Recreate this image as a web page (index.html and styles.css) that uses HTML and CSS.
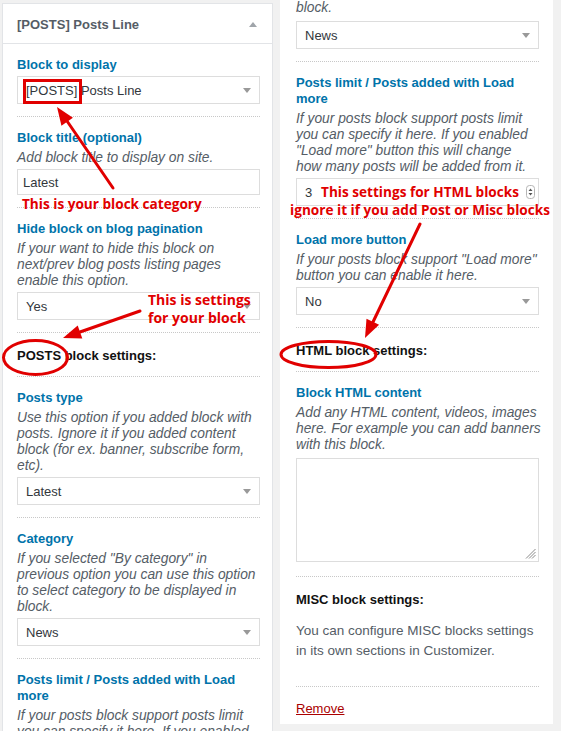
FILE: index.html
```html
<!DOCTYPE html>
<html>
<head>
<meta charset="utf-8">
<link rel="stylesheet" href="styles.css">
</head>
<body>
<div class="page">
  <section class="panel panel-left">
    <header class="phead"><span class="ptitle">[POSTS] Posts Line</span><i class="uptri"></i></header>
    <div class="pbody">
      <div class="ctl">
        <div class="lbl">Block to display</div>
        <div class="sel"><span>[POSTS] Posts Line</span><i class="caret"></i></div>
      </div>
      <div class="sep"></div>
      <div class="ctl">
        <div class="lbl">Block title (optional)</div>
        <div class="desc">Add block title to display on site.</div>
        <div class="inp">Latest</div>
      </div>
      <div class="sep"></div>
      <div class="ctl">
        <div class="lbl">Hide block on blog pagination</div>
        <div class="desc">If your want to hide this block on<br>next/prev blog posts listing pages<br>enable this option.</div>
        <div class="sel"><span>Yes</span><i class="caret"></i></div>
      </div>
      <div class="sep"></div>
      <div class="heading">POSTS block settings:</div>
      <div class="sep"></div>
      <div class="ctl">
        <div class="lbl">Posts type</div>
        <div class="desc">Use this option if you added block with<br>posts. Ignore it if you added content<br>block (for ex. banner, subscribe form,<br>etc).</div>
        <div class="sel"><span>Latest</span><i class="caret"></i></div>
      </div>
      <div class="sep"></div>
      <div class="ctl">
        <div class="lbl">Category</div>
        <div class="desc">If you selected "By category" in<br>previous option you can use this option<br>to select category to be displayed in<br>block.</div>
        <div class="sel"><span>News</span><i class="caret"></i></div>
      </div>
      <div class="sep"></div>
      <div class="ctl">
        <div class="lbl">Posts limit / Posts added with Load more</div>
        <div class="desc">If your posts block support posts limit<br>you can specify it here. If you enabled</div>
      </div>
    </div>
  </section>

  <section class="panel panel-right">
    <div class="ctl ctl-top">
      <div class="desc desc-first">block.</div>
      <div class="sel sel-first"><span>News</span><i class="caret"></i></div>
    </div>
    <div class="sep"></div>
    <div class="ctl">
      <div class="lbl">Posts limit / Posts added with Load more</div>
      <div class="desc">If your posts block support posts limit<br>you can specify it here. If you enabled<br>"Load more" button this will change<br>how many posts will be added from it.</div>
      <div class="sel num"><span>3</span>
        <svg class="spin" width="9" height="14" viewBox="0 0 9 14"><rect x="0.5" y="0.5" width="8" height="13" rx="3" fill="#fff" stroke="#b5b5b5"/><path d="M2.5 6 L4.5 3.5 L6.5 6 Z M2.5 8 L4.5 10.5 L6.5 8 Z" fill="#555"/></svg>
      </div>
    </div>
    <div class="sep"></div>
    <div class="ctl">
      <div class="lbl">Load more button</div>
      <div class="desc">If your posts block support "Load more"<br>button you can enable it here.</div>
      <div class="sel"><span>No</span><i class="caret"></i></div>
    </div>
    <div class="sep"></div>
    <div class="heading">HTML block settings:</div>
    <div class="sep"></div>
    <div class="ctl ctl-area">
      <div class="lbl">Block HTML content</div>
      <div class="desc">Add any HTML content, videos, images<br>here. For example you can add banners<br>with this block.</div>
      <div class="area">
        <svg class="grip" width="11" height="11" viewBox="0 0 11 11"><path d="M10.5 1 L1 10.5 M10.5 4 L4 10.5 M10.5 7 L7 10.5" stroke="#8a8a8a" stroke-width="1"/></svg>
      </div>
    </div>
    <div class="sep"></div>
    <div class="misc">
      <div class="heading-text">MISC block settings:</div>
      <p class="misc-text">You can configure MISC blocks settings<br>in its own sections in Customizer.</p>
    </div>
    <div class="sep"></div>
    <div class="foot"><a class="remove" href="#">Remove</a></div>
  </section>
</div>

<svg class="marks" width="561" height="731" viewBox="0 0 561 731">
  <g fill="none" stroke="#e10000" stroke-width="3">
    <rect x="24.5" y="80.5" width="56" height="22"/>
    <ellipse cx="35.5" cy="357.5" rx="32" ry="17"/>
    <ellipse cx="328.5" cy="354.5" rx="47.5" ry="13"/>
    <line x1="113" y1="188" x2="67" y2="121" stroke-linecap="round"/>
    <line x1="140" y1="311" x2="80" y2="332" stroke-linecap="round"/>
    <line x1="420" y1="224" x2="373" y2="322" stroke-linecap="round"/>
  </g>
  <g fill="#e10000">
    <polygon points="57,107 72.95,117.8 61.45,125.8"/>
    <polygon points="63,338 82.3,338.6 77.7,325.4"/>
    <polygon points="365,338 379.1,324.8 366.5,318.8"/>
  </g>
</svg>
<div class="note note-cat">This is your block category</div>
<div class="note note-set">This is settings<br>for your block</div>
<div class="note note-html">This settings for HTML blocks<br>ignore it if you add Post or Misc blocks</div>
</body>
</html>
```

FILE: styles.css
```css
* { box-sizing: border-box; }
html, body { margin: 0; padding: 0; }
body {
  width: 561px;
  height: 731px;
  overflow: hidden;
  position: relative;
  background: #f1f1f1;
  font-family: "Liberation Sans", Arial, sans-serif;
  color: #23282d;
}
.page {
  display: flex;
  align-items: flex-start;
  gap: 7px;
  padding-left: 2px;
}
.panel { background: #fff; }
.panel-left {
  width: 271px;
  margin-top: 3px;
  border: 1px solid #e2e4e7;
  border-bottom: none;
  height: 760px;
}
.phead {
  height: 40px;
  border-bottom: 1px solid #e2e4e7;
  display: flex;
  align-items: center;
  justify-content: space-between;
  padding: 1px 15px 0 14px;
}
.ptitle {
  font-size: 13px;
  font-weight: bold;
  color: #555d66;
}
.uptri {
  width: 0;
  height: 0;
  border-left: 4px solid transparent;
  border-right: 4px solid transparent;
  border-bottom: 5px solid #a0a5aa;
}
.pbody { padding: 0 12px 0 14px; }
.panel-right {
  width: 273px;
  padding: 0 14px 6px 16px;
}
.ctl { padding: 13px 0 12px; }
.ctl-top { padding-top: 0; }
.ctl-area { padding-bottom: 14px; }
.sep { border-top: 1px dotted #c8c8c8; height: 0; }
.lbl {
  font-size: 13px;
  font-weight: bold;
  line-height: 16px;
  color: #0073aa;
}
.desc {
  margin-top: 4px;
  font-size: 13.8px;
  font-style: italic;
  line-height: 16px;
  color: #555d66;
  white-space: nowrap;
}
.desc-first { margin-top: 0; }
.sel, .inp {
  margin-top: 3px;
  height: 28px;
  border: 1px solid #ddd;
  display: flex;
  align-items: center;
  justify-content: space-between;
  padding: 0 8px 0 8px;
  font-size: 13px;
  color: #32373c;
  background: #fff;
}
.sel-first { margin-top: 5px; }
.inp { height: 26px; padding-left: 5px; }
.num { padding-left: 8px; padding-right: 3px; }
.spin { display: block; }
.caret {
  width: 0;
  height: 0;
  border-left: 4px solid transparent;
  border-right: 4px solid transparent;
  border-top: 5px solid #999;
}
.heading {
  padding: 14px 0 11px;
  font-size: 13px;
  font-weight: bold;
  line-height: 18px;
  color: #111;
}
.area {
  margin-top: 5px;
  height: 104px;
  border: 1px solid #ddd;
  display: flex;
  align-items: flex-end;
  justify-content: flex-end;
  padding: 0 2px 2px 0;
}
.grip { display: block; }
.misc { padding: 14px 0 25px; }
.heading-text {
  font-size: 13px;
  font-weight: bold;
  line-height: 18px;
  color: #111;
}
.misc-text {
  margin: 12px 0 0;
  font-size: 13.5px;
  line-height: 20px;
  color: #555d66;
}
.foot { padding: 12px 0 0; line-height: 18px; }
.remove {
  font-size: 13px;
  color: #a00;
  text-decoration: underline;
}
.marks {
  position: absolute;
  left: 0;
  top: 0;
}
.note {
  position: absolute;
  font-family: "Open Sans", "DejaVu Sans", sans-serif;
  font-weight: bold;
  font-size: 13.6px;
  line-height: 18px;
  color: #e10000;
  white-space: nowrap;
}
.note-cat { left: 22px; top: 195px; }
.note-set { left: 148px; top: 291px; font-size: 14px; }
.note-html { left: 290px; width: 260px; top: 183px; text-align: center; }
```
